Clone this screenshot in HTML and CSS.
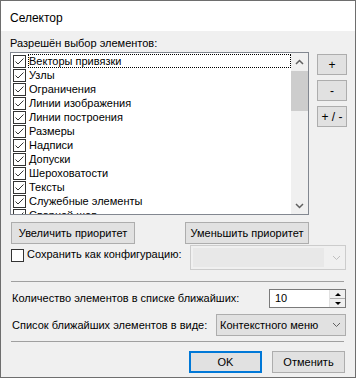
FILE: index.html
```html
<!DOCTYPE html>
<html>
<head>
<meta charset="UTF-8">
<title>Селектор</title>
<link rel="stylesheet" href="styles.css">
</head>
<body>

<div class="dialog">
  <div class="titlebar">Селектор</div>

  <div class="content">
    <div class="caption">Разрешён выбор элементов:</div>

    <div class="listrow">
      <div class="listbox">
        <div class="items">
          <div class="item"><span class="cb"><svg viewBox="0 0 11 11"><path d="M1.5 5.5 L4 8 L9.5 2.5"/></svg></span><span class="text focus">Векторы привязки</span></div>
          <div class="item"><span class="cb"><svg viewBox="0 0 11 11"><path d="M1.5 5.5 L4 8 L9.5 2.5"/></svg></span><span class="text">Узлы</span></div>
          <div class="item"><span class="cb"><svg viewBox="0 0 11 11"><path d="M1.5 5.5 L4 8 L9.5 2.5"/></svg></span><span class="text">Ограничения</span></div>
          <div class="item"><span class="cb"><svg viewBox="0 0 11 11"><path d="M1.5 5.5 L4 8 L9.5 2.5"/></svg></span><span class="text">Линии изображения</span></div>
          <div class="item"><span class="cb"><svg viewBox="0 0 11 11"><path d="M1.5 5.5 L4 8 L9.5 2.5"/></svg></span><span class="text">Линии построения</span></div>
          <div class="item"><span class="cb"><svg viewBox="0 0 11 11"><path d="M1.5 5.5 L4 8 L9.5 2.5"/></svg></span><span class="text">Размеры</span></div>
          <div class="item"><span class="cb"><svg viewBox="0 0 11 11"><path d="M1.5 5.5 L4 8 L9.5 2.5"/></svg></span><span class="text">Надписи</span></div>
          <div class="item"><span class="cb"><svg viewBox="0 0 11 11"><path d="M1.5 5.5 L4 8 L9.5 2.5"/></svg></span><span class="text">Допуски</span></div>
          <div class="item"><span class="cb"><svg viewBox="0 0 11 11"><path d="M1.5 5.5 L4 8 L9.5 2.5"/></svg></span><span class="text">Шероховатости</span></div>
          <div class="item"><span class="cb"><svg viewBox="0 0 11 11"><path d="M1.5 5.5 L4 8 L9.5 2.5"/></svg></span><span class="text">Тексты</span></div>
          <div class="item"><span class="cb"><svg viewBox="0 0 11 11"><path d="M1.5 5.5 L4 8 L9.5 2.5"/></svg></span><span class="text">Служебные элементы</span></div>
          <div class="item"><span class="cb"><svg viewBox="0 0 11 11"><path d="M1.5 5.5 L4 8 L9.5 2.5"/></svg></span><span class="text">Сварной шов</span></div>
        </div>
        <div class="vscroll">
          <div class="arrow"><svg width="9" height="6" viewBox="0 0 9 6"><path d="M1 5 L4.5 1.5 L8 5"/></svg></div>
          <div class="thumb"></div>
          <div class="track"></div>
          <div class="arrow"><svg width="9" height="6" viewBox="0 0 9 6"><path d="M1 1 L4.5 4.5 L8 1"/></svg></div>
        </div>
      </div>

      <div class="sidebtns">
        <button class="btn side">+</button>
        <button class="btn side">-</button>
        <button class="btn side">+ / -</button>
      </div>
    </div>

    <div class="prio">
      <button class="btn wide">Увеличить приоритет</button>
      <button class="btn wide">Уменьшить приоритет</button>
    </div>

    <div class="saverow">
      <label class="chk"><span class="cb"></span><span class="chktext">Сохранить как конфигурацию:</span></label>
      <div class="combo disabled">
        <div class="field"></div>
        <svg width="9" height="6" viewBox="0 0 9 6"><path d="M1 1 L4.5 4.5 L8 1"/></svg>
      </div>
    </div>

    <div class="sep"></div>

    <div class="formrow first">
      <span class="lbl">Количество элементов в списке ближайших:</span>
      <div class="spin">
        <div class="val">10</div>
        <div class="spinbtns">
          <div class="sb"><span class="tri up"></span></div>
          <div class="sb"><span class="tri down"></span></div>
        </div>
      </div>
    </div>

    <div class="formrow second">
      <span class="lbl">Список ближайших элементов в виде:</span>
      <div class="combo menu">
        <span class="comboval">Контекстного меню</span>
        <svg width="9" height="6" viewBox="0 0 9 6"><path d="M1 1 L4.5 4.5 L8 1"/></svg>
      </div>
    </div>

    <div class="sep bottom"></div>

    <div class="footer">
      <button class="btn foot default">OK</button>
      <button class="btn foot">Отменить</button>
    </div>
  </div>
</div>

</body>
</html>
```

FILE: styles.css
```css
body {
  margin: 0;
  background: #ffffff;
  font-family: "Liberation Sans", Arial, sans-serif;
  font-size: 11px;
  color: #000;
}

.dialog {
  width: 356px;
  height: 378px;
  box-sizing: border-box;
  border: 1px solid #6e6e6e;
  background: #f0f0f0;
  display: flex;
  flex-direction: column;
}

.titlebar {
  height: 30px;
  box-sizing: border-box;
  padding: 10px 0 0 9px;
  background: #fff;
  font-size: 12px;
  line-height: 14px;
}

.content {
  flex: 1;
  padding: 0 8px 0 9px;
}

.caption {
  margin-top: 6px;
  line-height: 13px;
}

/* list with checkboxes */
.listrow {
  display: flex;
  margin-top: 2px;
}

.listbox {
  width: 299px;
  height: 163px;
  box-sizing: border-box;
  border: 1px solid #828790;
  background: #fff;
  display: flex;
}

.items {
  flex: 1;
  overflow: hidden;
  padding-top: 1px;
}

.item {
  height: 14px;
  display: flex;
  align-items: flex-start;
  padding-left: 2px;
}

.cb {
  width: 13px;
  height: 13px;
  box-sizing: border-box;
  border: 1px solid #333;
  background: #fff;
  flex: none;
  margin-top: 1px;
}

.cb svg {
  display: block;
  width: 11px;
  height: 11px;
  fill: none;
  stroke: #333;
  stroke-width: 1;
}

.text {
  flex: 1;
  margin-left: 2px;
  padding-left: 1px;
  height: 14px;
  line-height: 14px;
  white-space: nowrap;
}

.focus {
  outline: 1px dotted #000;
  outline-offset: -1px;
}

.vscroll {
  width: 17px;
  background: #f0f0f0;
  display: flex;
  flex-direction: column;
}

.arrow {
  height: 17px;
  display: flex;
  align-items: center;
  justify-content: center;
}

.arrow svg, .combo svg {
  fill: none;
  stroke: #606060;
  stroke-width: 1.5;
}

.thumb {
  height: 40px;
  margin-top: 1px;
  background: #cdcdcd;
}

.track {
  flex: 1;
}

/* buttons */
.btn {
  font-family: inherit;
  font-size: 11px;
  color: #000;
  background: #e1e1e1;
  border: 1px solid #adadad;
  padding: 0;
  margin: 0;
  box-sizing: border-box;
}

.sidebtns {
  display: flex;
  flex-direction: column;
  gap: 5px;
  margin: 2px 0 0 8px;
}

.side {
  width: 30px;
  height: 21px;
  font-size: 12px;
}

.prio {
  width: 299px;
  box-sizing: border-box;
  padding-left: 1px;
  margin-top: 7px;
  display: flex;
  justify-content: space-between;
}

.wide {
  width: 124px;
  height: 22px;
}

/* save as configuration */
.saverow {
  display: flex;
  align-items: flex-start;
  margin-top: 1px;
}

.chk {
  display: flex;
  align-items: flex-start;
  margin: 3px 0 0 1px;
  line-height: 13px;
}

.chktext {
  margin-left: 3px;
}

.combo {
  margin-left: auto;
  margin-right: 1px;
  box-sizing: border-box;
  display: flex;
  align-items: center;
}

.combo.disabled {
  width: 156px;
  height: 25px;
  border: 1px solid #cccccc;
  background: #f0f0f0;
  padding: 2px 4px 2px 2px;
}

.combo.disabled .field {
  flex: 1;
  align-self: stretch;
  background: #e8e8e8;
  margin-right: 8px;
}

.combo.disabled svg {
  stroke: #bfbfbf;
  stroke-width: 1;
}

.sep {
  height: 1px;
  background: #a0a0a0;
  margin: 11px 3px 0 1px;
}

.sep.bottom {
  margin-top: 5px;
}

.formrow {
  display: flex;
  align-items: center;
}

.formrow.first {
  margin-top: 7px;
}

.formrow.second {
  margin-top: 6px;
}

.lbl {
  margin-left: 2px;
  line-height: 13px;
}

.spin {
  margin-left: auto;
  margin-right: 1px;
  width: 77px;
  height: 19px;
  box-sizing: border-box;
  border: 1px solid #7a7a7a;
  background: #fff;
  display: flex;
}

.val {
  flex: 1;
  padding-left: 5px;
  line-height: 17px;
}

.spinbtns {
  width: 15px;
  display: flex;
  flex-direction: column;
  border-left: 1px solid #e1e1e1;
}

.sb {
  flex: 1;
  background: #f0f0f0;
  display: flex;
  align-items: center;
  justify-content: center;
}

.sb + .sb {
  border-top: 1px solid #adadad;
}

.tri {
  width: 0;
  height: 0;
  border-left: 3px solid transparent;
  border-right: 3px solid transparent;
}

.tri.up {
  border-bottom: 3px solid #000;
}

.tri.down {
  border-top: 3px solid #000;
}

.combo.menu {
  width: 130px;
  height: 22px;
  border: 1px solid #adadad;
  background: #e1e1e1;
  padding: 0 4px 0 3px;
}

.comboval {
  flex: 1;
}

.combo.menu svg {
  stroke-width: 1;
}

/* dialog buttons */
.footer {
  display: flex;
  justify-content: flex-end;
  gap: 10px;
  margin: 9px 2px 0 0;
}

.foot {
  width: 73px;
  height: 22px;
}

.default {
  border: 2px solid #0078d7;
}
```
